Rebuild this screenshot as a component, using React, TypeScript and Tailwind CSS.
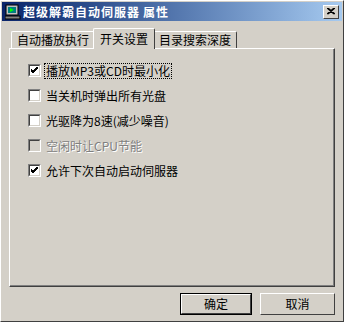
import React from "react";

const font = { fontFamily: '"Noto Sans CJK SC", "Liberation Sans", sans-serif' };

const Check = ({ checked, disabled }: { checked?: boolean; disabled?: boolean }) => (
  <div className="w-[13px] h-[13px] border-t border-l border-[#808080] border-r-white border-b-white border-r border-b shrink-0">
    <div
      className={`w-full h-full border-t border-l border-[#404040] border-r border-b border-r-[#d4d0c8] border-b-[#d4d0c8] flex items-center justify-center ${
        disabled ? "bg-[#d4d0c8]" : "bg-white"
      }`}
    >
      {checked && (
        <svg width="7" height="7" viewBox="0 0 7 7">
          <path d="M0 2 L2 4 L7 -1 M0 3 L2 5 L7 0 M0 4 L2 6 L7 1" stroke="black" strokeWidth="1" fill="none" shapeRendering="crispEdges" />
        </svg>
      )}
    </div>
  </div>
);

const Row = ({ label, checked, disabled, focus }: { label: string; checked?: boolean; disabled?: boolean; focus?: boolean }) => (
  <div className="flex items-center h-[25px] gap-[4px]">
    <Check checked={checked} disabled={disabled} />
    <span
      className={`text-[12px] leading-[14px] px-[1px] ${focus ? "outline outline-1 outline-dotted outline-black" : ""} ${
        disabled ? "text-[#808080] [text-shadow:1px_1px_0_#ffffff]" : "text-black"
      }`}
    >
      {label}
    </span>
  </div>
);

const Tab = ({ label, active }: { label: string; active?: boolean }) => (
  <div
    className={`border-t border-l border-white border-r border-r-[#404040] rounded-t-[2px] text-[12px] leading-[14px] text-black bg-[#d4d0c8] ${
      active ? "h-[21px] pt-[3px] px-[6px] relative z-10 -mb-px -mx-[2px]" : "h-[17px] pt-[1px] px-[5px]"
    }`}
  >
    {label}
  </div>
);

const Btn = ({ label, def }: { label: string; def?: boolean }) => (
  <div className={`${def ? "border border-black" : ""}`}>
    <div
      className={`border-t border-l border-white border-r border-b border-r-[#404040] border-b-[#404040] flex items-center justify-center text-[12px] text-black ${
        def ? "w-[70px] h-[20px]" : "w-[75px] h-[22px]"
      }`}
    >
      {label}
    </div>
  </div>
);

export default function App() {
  return (
    <div style={font} className="w-[344px] h-[322px] bg-[#d4d0c8] border-l border-t border-white border-r border-b border-r-[#404040] border-b-[#404040] flex flex-col overflow-hidden">
      <div className="mx-[1px] mt-[1px] h-[19px] bg-gradient-to-r from-[#0a246a] to-[#a6caf0] flex items-center pl-[3px] pr-[3px]">
        <svg width="16" height="16" viewBox="0 0 16 16" className="shrink-0">
          <rect x="1" y="1" width="12" height="10" fill="#c0c0c0" stroke="#000" strokeWidth="1" />
          <rect x="3" y="3" width="8" height="6" fill="#008080" />
          <path d="M5 4 L9 6 L5 8 Z" fill="#00ff00" />
          <rect x="0" y="12" width="15" height="3" fill="#808080" stroke="#000" strokeWidth="1" />
        </svg>
        <span className="ml-[2px] text-white font-bold text-[12px] leading-[15px] tracking-[1px] whitespace-nowrap">超级解霸自动伺服器</span>
        <span className="ml-[3px] text-white font-bold text-[12px] leading-[15px] tracking-[1px] whitespace-nowrap">属性</span>
        <div className="ml-auto w-[16px] h-[14px] bg-[#d4d0c8] border-t border-l border-white border-r border-b border-r-[#404040] border-b-[#404040] flex items-center justify-center">
          <svg width="8" height="7" viewBox="0 0 8 7">
            <path d="M0 0 L7 6 M1 0 L8 6 M7 0 L0 6 M8 0 L1 6" stroke="black" strokeWidth="1.2" />
          </svg>
        </div>
      </div>

      <div className="flex items-end pl-[10px] mt-[7px] h-[20px]">
        <Tab label="自动播放执行" />
        <Tab label="开关设置" active />
        <Tab label="目录搜索深度" />
      </div>

      <div className="ml-[8px] mr-[8px] h-[239px] border-t border-l border-white border-r border-b border-r-[#404040] border-b-[#404040]">
        <div className="h-full border-r border-b border-[#808080] pl-[18px] pt-[9px]">
          <Row label="播放MP3或CD时最小化" checked focus />
          <Row label="当关机时弹出所有光盘" />
          <Row label="光驱降为8速(减少噪音)" />
          <Row label="空闲时让CPU节能" disabled />
          <Row label="允许下次自动启动伺服器" checked />
        </div>
      </div>

      <div className="flex justify-end gap-[8px] pr-[8px] mt-[6px]">
        <Btn label="确定" def />
        <Btn label="取消" />
      </div>
    </div>
  );
}
